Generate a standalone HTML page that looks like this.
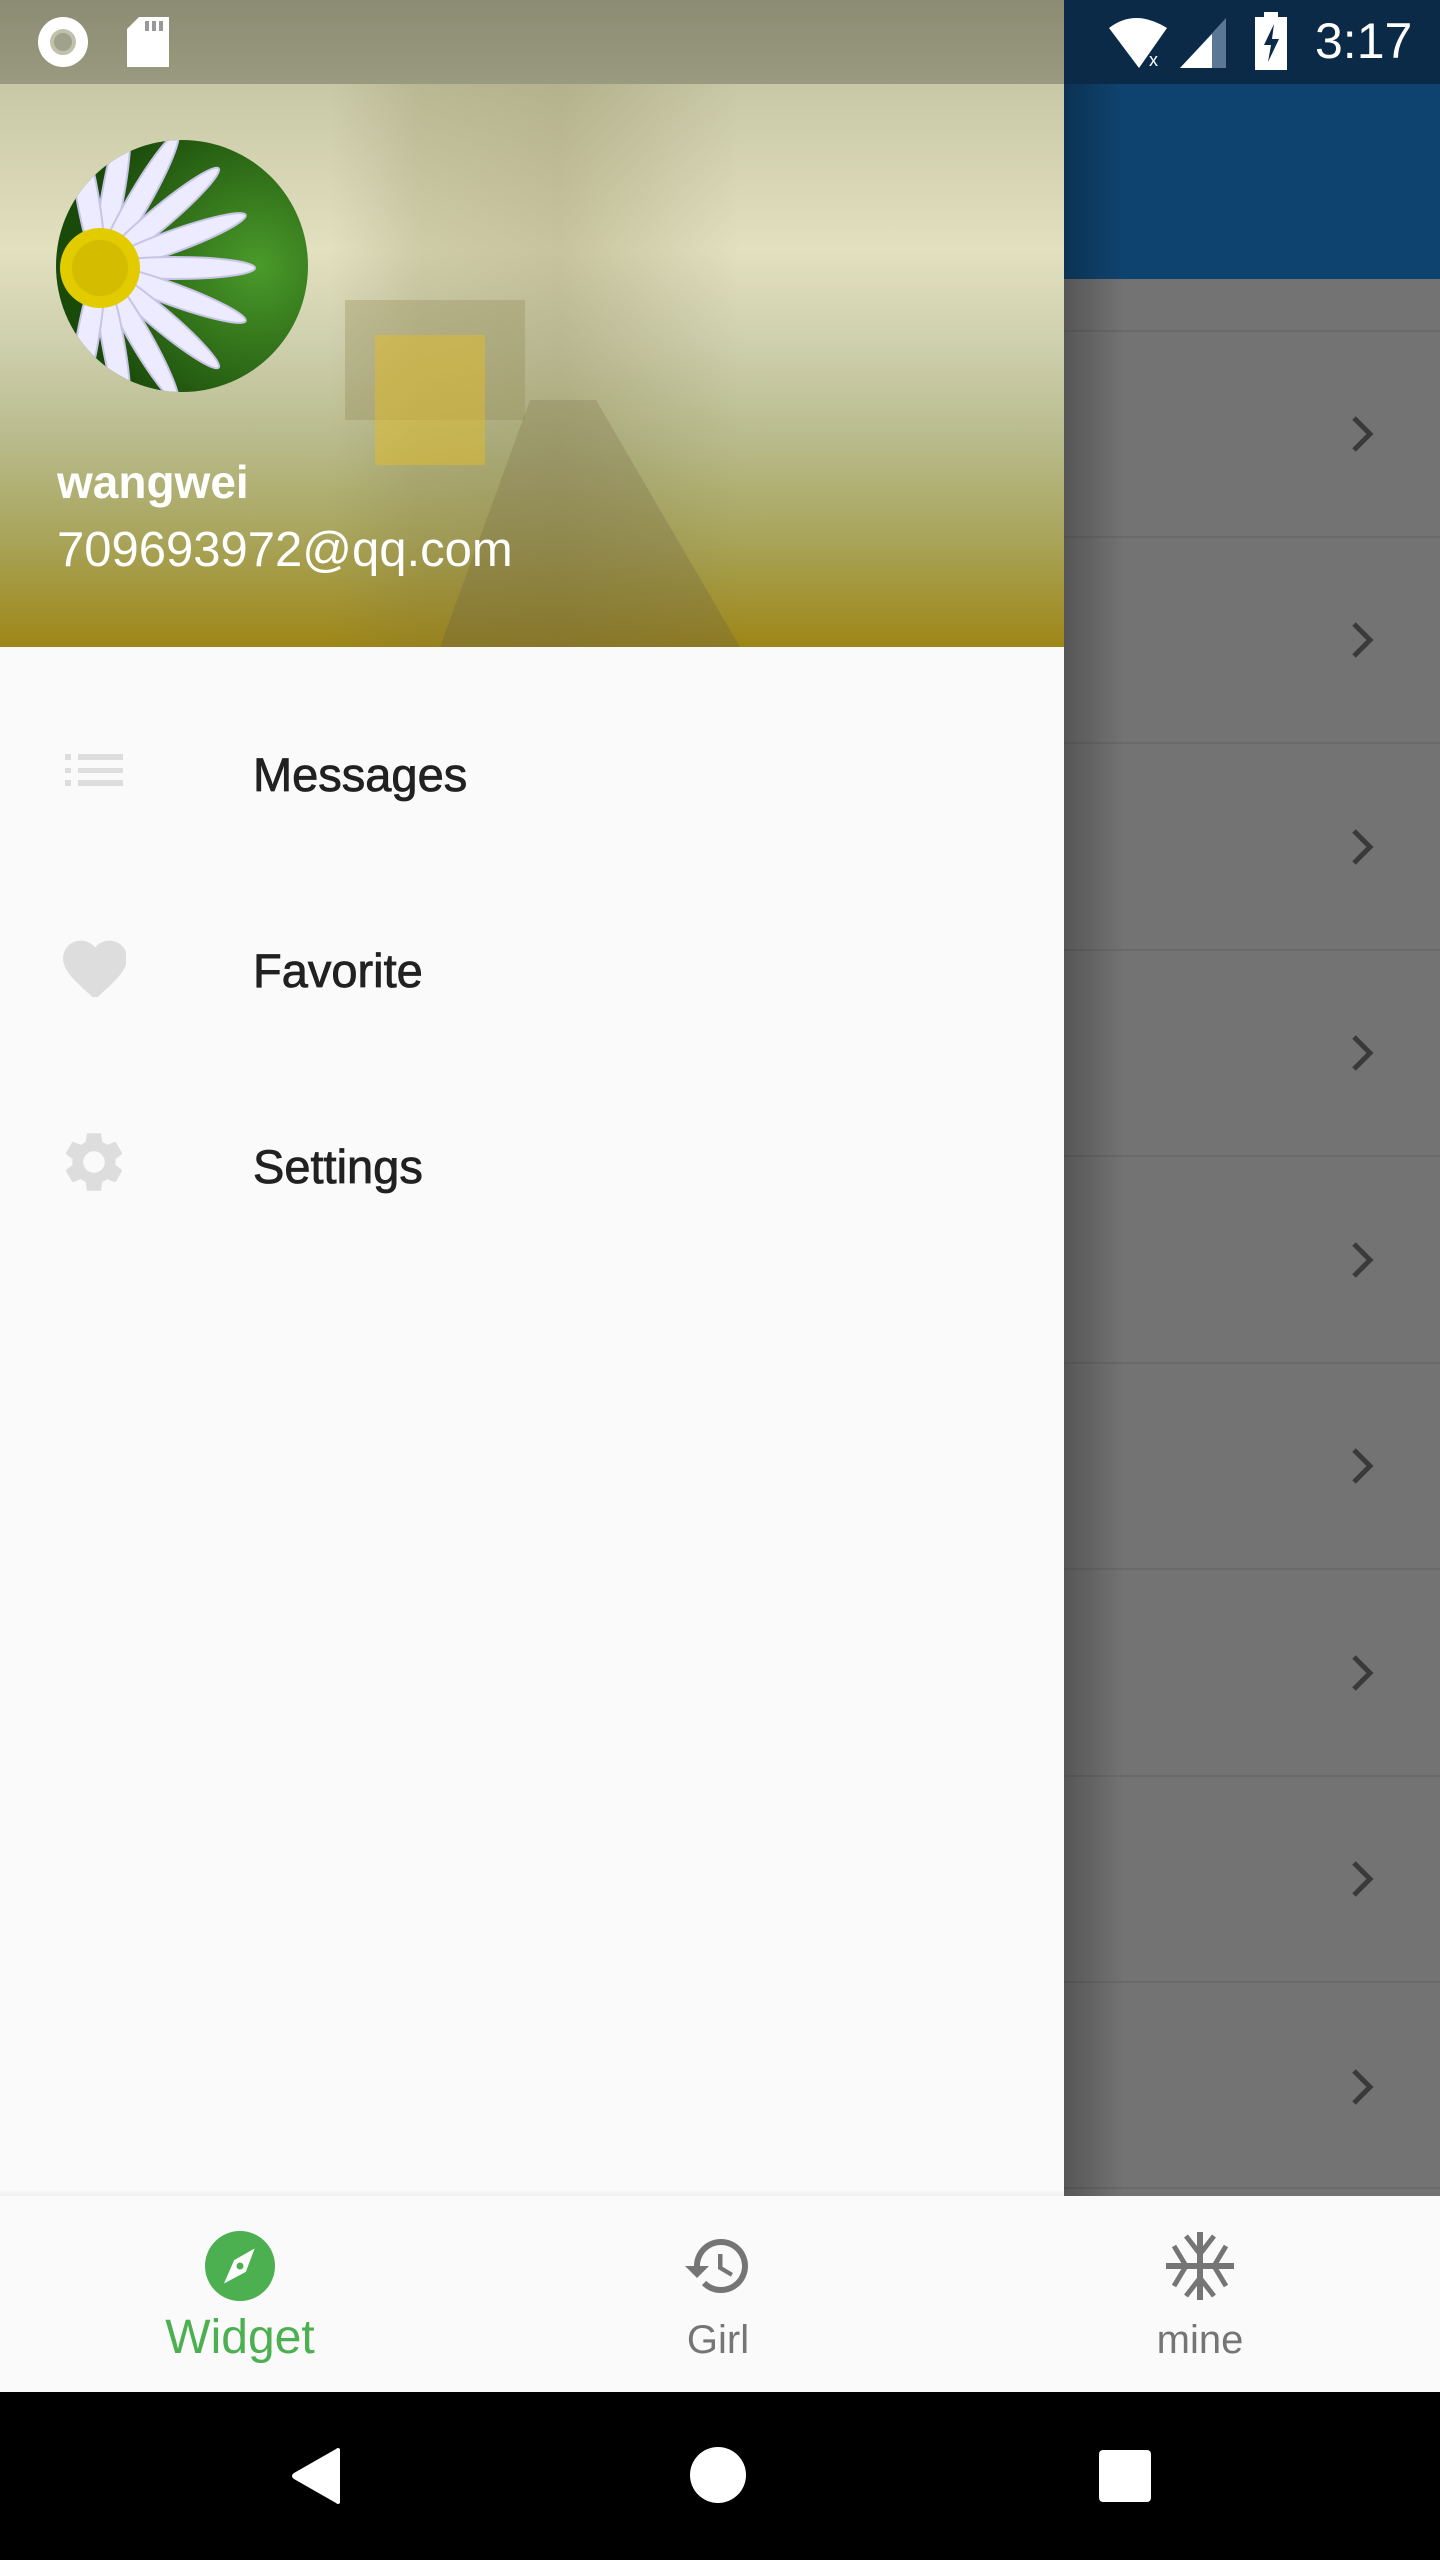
<!DOCTYPE html>
<html><head><meta charset="utf-8"><style>
*{margin:0;padding:0;box-sizing:border-box}
body{width:1440px;height:2560px;position:relative;overflow:hidden;background:#737373;font-family:"Liberation Sans",Roboto,sans-serif}
.abs{position:absolute}
.line{position:absolute;left:1064px;width:376px;height:2px;background:#6a6a6a}
.chev{position:absolute;left:1348px;width:30px;height:40px}
.item{position:absolute;left:253px;font-size:47px;color:#212121;line-height:1;-webkit-text-stroke:0.8px #212121}
</style></head><body>
<div class="abs" style="left:1064px;top:0;width:376px;height:84px;background:#0b2a48"></div>
<div class="abs" style="left:1064px;top:84px;width:376px;height:195px;background:#0f436f"></div>
<div class="line" style="top:330px"></div><div class="line" style="top:536px"></div><div class="line" style="top:742px"></div><div class="line" style="top:949px"></div><div class="line" style="top:1155px"></div><div class="line" style="top:1362px"></div><div class="line" style="top:1568px"></div><div class="line" style="top:1775px"></div><div class="line" style="top:1981px"></div><div class="line" style="top:2187px"></div>
<svg class="chev" style="top:414px" viewBox="0 0 30 40"><path d="M6 4 L22 20 L6 36" stroke="#3a3a3a" stroke-width="5" fill="none"/></svg>
<svg class="chev" style="top:620px" viewBox="0 0 30 40"><path d="M6 4 L22 20 L6 36" stroke="#3a3a3a" stroke-width="5" fill="none"/></svg>
<svg class="chev" style="top:827px" viewBox="0 0 30 40"><path d="M6 4 L22 20 L6 36" stroke="#3a3a3a" stroke-width="5" fill="none"/></svg>
<svg class="chev" style="top:1033px" viewBox="0 0 30 40"><path d="M6 4 L22 20 L6 36" stroke="#3a3a3a" stroke-width="5" fill="none"/></svg>
<svg class="chev" style="top:1240px" viewBox="0 0 30 40"><path d="M6 4 L22 20 L6 36" stroke="#3a3a3a" stroke-width="5" fill="none"/></svg>
<svg class="chev" style="top:1446px" viewBox="0 0 30 40"><path d="M6 4 L22 20 L6 36" stroke="#3a3a3a" stroke-width="5" fill="none"/></svg>
<svg class="chev" style="top:1653px" viewBox="0 0 30 40"><path d="M6 4 L22 20 L6 36" stroke="#3a3a3a" stroke-width="5" fill="none"/></svg>
<svg class="chev" style="top:1859px" viewBox="0 0 30 40"><path d="M6 4 L22 20 L6 36" stroke="#3a3a3a" stroke-width="5" fill="none"/></svg>
<svg class="chev" style="top:2067px" viewBox="0 0 30 40"><path d="M6 4 L22 20 L6 36" stroke="#3a3a3a" stroke-width="5" fill="none"/></svg>
<div class="abs" style="left:1064px;top:84px;width:60px;height:2112px;background:linear-gradient(90deg,rgba(0,0,0,.25),rgba(0,0,0,0))"></div>
<svg class="abs" style="left:1105px;top:14px" width="80" height="56" viewBox="0 0 80 56"><path d="M4 14 Q30 -6 62 14 L34 54 Z" fill="#fff"/><text x="44" y="52" font-size="18" fill="#fff" font-family="Liberation Sans">x</text></svg>
<svg class="abs" style="left:1178px;top:14px" width="50" height="56"><polygon points="2,54 48,4 48,54" fill="#5a7896"/><polygon points="2,54 34,20 34,54" fill="#fff"/></svg>
<svg class="abs" style="left:1255px;top:12px" width="34" height="58"><rect x="9" y="0" width="14" height="6" fill="#fff"/><rect x="0" y="5" width="32" height="53" fill="#fff"/><path d="M19 12 L9 33 L16 33 L13 50 L24 27 L17 27 Z" fill="#0b2a48"/></svg>
<div class="abs" style="left:1315px;top:12px;font-size:50px;color:#fff">3:17</div>
<div class="abs" style="left:0;top:0;width:1064px;height:2196px;background:#fafafa"></div>
<div class="abs" style="left:0;top:0;width:1064px;height:647px;background:linear-gradient(180deg,#8c8c74 0,#9a9a80 84px,#c8c8a6 84px,#e2e0bf 250px,#cfd0ae 340px,#b8bb8c 440px,#a8a45a 540px,#9e8616 647px)"></div>
<div class="abs" style="left:0;top:84px;width:1064px;height:563px;background:linear-gradient(90deg,rgba(0,0,0,0) 0,rgba(0,0,0,0) 330px,rgba(120,110,60,.18) 420px,rgba(120,110,60,.25) 560px,rgba(0,0,0,0) 740px)"></div>
<!-- pier hint -->
<div class="abs" style="left:345px;top:300px;width:180px;height:120px;background:rgba(150,140,90,.35)"></div>
<div class="abs" style="left:375px;top:335px;width:110px;height:130px;background:rgba(230,190,30,.45)"></div>
<div class="abs" style="left:440px;top:400px;width:300px;height:247px;background:linear-gradient(180deg,rgba(130,120,80,.3),rgba(110,100,60,.35));clip-path:polygon(30% 0,52% 0,100% 100%,0 100%)"></div>
<div class="abs" style="left:38px;top:17px;width:50px;height:50px;border-radius:50%;background:#fff"></div>
<div class="abs" style="left:50px;top:29px;width:26px;height:26px;border-radius:50%;background:#a0a28c;border:4px solid #c0c2ac"></div>
<svg class="abs" style="left:127px;top:17px" width="42" height="50"><path d="M12 0 H42 V50 H0 V12 Z" fill="#fff"/><rect x="18" y="4" width="4" height="10" fill="#999"/><rect x="25" y="4" width="4" height="10" fill="#999"/><rect x="32" y="4" width="4" height="10" fill="#999"/></svg>
<svg class="abs" style="left:56px;top:140px" width="252" height="252" viewBox="0 0 252 252">
<defs><clipPath id="c"><circle cx="126" cy="126" r="126"/></clipPath><radialGradient id="g" cx="0.8" cy="0.5" r="0.7"><stop offset="0" stop-color="#4a9a2a"/><stop offset="1" stop-color="#1a4a0a"/></radialGradient></defs>
<g clip-path="url(#c)"><rect width="252" height="252" fill="url(#g)"/>
<g transform="translate(44,128)" fill="#ecebff" stroke="#c8c4e6" stroke-width="2">
<ellipse cx="75" cy="0" rx="80" ry="11" transform="rotate(-80)"/><ellipse cx="75" cy="0" rx="80" ry="11" transform="rotate(-60)"/><ellipse cx="75" cy="0" rx="80" ry="11" transform="rotate(-40)"/><ellipse cx="75" cy="0" rx="80" ry="11" transform="rotate(-20)"/><ellipse cx="75" cy="0" rx="80" ry="11" transform="rotate(0)"/><ellipse cx="75" cy="0" rx="80" ry="11" transform="rotate(20)"/><ellipse cx="75" cy="0" rx="80" ry="11" transform="rotate(40)"/><ellipse cx="75" cy="0" rx="80" ry="11" transform="rotate(60)"/><ellipse cx="75" cy="0" rx="80" ry="11" transform="rotate(80)"/><ellipse cx="75" cy="0" rx="80" ry="11" transform="rotate(100)"/><ellipse cx="75" cy="0" rx="80" ry="11" transform="rotate(-100)"/>
</g>
<circle cx="44" cy="128" r="40" fill="#e2cc00"/><circle cx="44" cy="128" r="28" fill="#d4bc00"/></g></svg>
<div class="abs" style="left:57px;top:455px;font-size:46px;font-weight:bold;color:#fff">wangwei</div>
<div class="abs" style="left:57px;top:522px;font-size:49px;color:#fff">709693972@qq.com</div>
<svg class="abs" style="left:65px;top:754px" width="58" height="33"><rect x="0" y="0" width="6" height="6" fill="#ddd"/><rect x="13" y="0" width="45" height="6" fill="#ddd"/><rect x="0" y="14" width="6" height="5" fill="#ddd"/><rect x="13" y="14" width="45" height="5" fill="#ddd"/><rect x="0" y="26" width="6" height="6" fill="#ddd"/><rect x="13" y="26" width="45" height="6" fill="#ddd"/></svg>
<div class="item" style="top:751px">Messages</div>
<svg class="abs" style="left:62px;top:937px" width="64" height="60" viewBox="0 0 24 22"><path d="M12 21.35l-1.45-1.32C5.4 15.36 2 12.28 2 8.5 2 5.42 4.42 3 7.5 3c1.74 0 3.41.81 4.5 2.09C13.09 3.81 14.76 3 16.5 3 19.58 3 22 5.42 22 8.5c0 3.78-3.4 6.86-8.55 11.54L12 21.35z" transform="translate(-2 -2.5) scale(1.2)" fill="#ddd"/></svg>
<div class="item" style="top:947px">Favorite</div>
<svg class="abs" style="left:58px;top:1126px" width="72" height="72" viewBox="0 0 24 24"><path fill="#ddd" d="M19.14 12.94c.04-.3.06-.61.06-.94 0-.32-.02-.64-.07-.94l2.030-1.580c.18-.14.23-.41.12-.61l-1.92-3.32c-.12-.22-.37-.29-.59-.22l-2.39.96c-.5-.38-1.030-.7-1.620-.94l-.36-2.540c-.04-.24-.24-.41-.48-.41h-3.84c-.24 0-.43.17-.47.41l-.36 2.54c-.59.24-1.13.57-1.62.94l-2.39-.96c-.22-.08-.47 0-.59.22L2.74 8.87c-.12.21-.08.47.12.61l2.03 1.58c-.05.3-.09.63-.09.94s.02.64.07.94l-2.03 1.58c-.18.14-.23.41-.12.61l1.92 3.32c.12.22.37.29.59.22l2.39-.96c.5.38 1.03.7 1.62.94l.36 2.54c.05.24.24.41.48.41h3.84c.24 0 .44-.17.47-.41l.36-2.54c.59-.24 1.13-.56 1.62-.94l2.39.96c.22.08.47 0 .59-.22l1.92-3.32c.12-.22.07-.47-.12-.61l-2.01-1.58zM12 15.6c-1.98 0-3.6-1.62-3.6-3.6s1.62-3.6 3.6-3.6 3.6 1.62 3.6 3.6-1.62 3.6-3.6 3.6z"/></svg>
<div class="item" style="top:1143px">Settings</div>
<div class="abs" style="left:0;top:2190px;width:1064px;height:6px;background:linear-gradient(180deg,#fafafa,#eee)"></div>
<div class="abs" style="left:0;top:2196px;width:1440px;height:196px;background:#fafafa"></div>
<svg class="abs" style="left:205px;top:2231px" width="70" height="70" viewBox="0 0 24 24"><circle cx="12" cy="12" r="12" fill="#4caf50"/><path d="M17 6 L14 14 L6.5 18 L10 10 Z" fill="#fff"/><circle cx="12" cy="12" r="1.2" fill="#4caf50"/></svg>
<div class="abs" style="left:140px;top:2310px;width:200px;text-align:center;font-size:48px;color:#4caf50">Widget</div>
<svg class="abs" style="left:680px;top:2230px" width="76" height="72" viewBox="0 0 24 24"><path fill="#757575" d="M13 3a9 9 0 0 0-9 9H1l3.89 3.890.07.14L9 12H6c0-3.87 3.13-7 7-7s7 3.13 7 7-3.13 7-7 7c-1.93 0-3.68-.79-4.94-2.06l-1.42 1.42A8.954 8.954 0 0 0 13 21a9 9 0 0 0 0-18zm-1 5v5l4.28 2.54.72-1.21-3.5-2.08V8H12z"/></svg>
<div class="abs" style="left:618px;top:2318px;width:200px;text-align:center;font-size:40px;color:#757575">Girl</div>
<svg class="abs" style="left:1164px;top:2230px" width="72" height="72" viewBox="0 0 72 72" stroke="#757575" stroke-width="6" fill="none"><path d="M36 2V70M2 36H70"/><path d="M22 6 L36 24 L50 6M22 66 L36 48 L50 66" stroke-width="5"/><path d="M10 16 L22 36 L10 56M62 16 L50 36 L62 56" stroke-width="5"/></svg>
<div class="abs" style="left:1100px;top:2318px;width:200px;text-align:center;font-size:40px;color:#757575">mine</div>
<div class="abs" style="left:0;top:2392px;width:1440px;height:168px;background:#000"></div>
<svg class="abs" style="left:290px;top:2447px" width="52" height="58"><path d="M50 2 L50 56 Q48 58 46 56 L4 32 Q0 29 4 26 L46 2 Q48 0 50 2Z" fill="#fff"/></svg>
<div class="abs" style="left:690px;top:2447px;width:56px;height:56px;border-radius:50%;background:#fff"></div>
<div class="abs" style="left:1099px;top:2450px;width:52px;height:52px;border-radius:4px;background:#fff"></div>
</body></html>
